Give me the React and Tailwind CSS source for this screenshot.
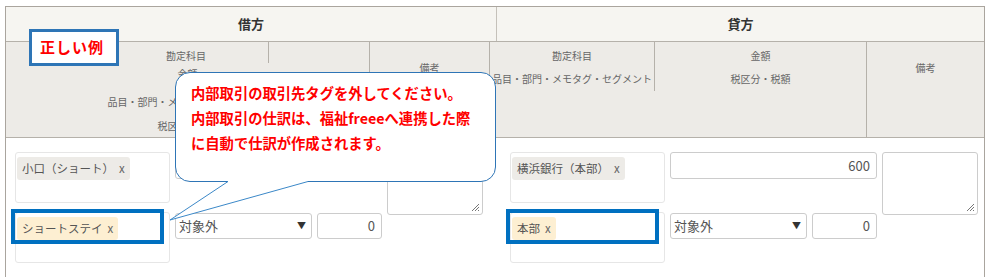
import React from 'react';

const jp = { fontFamily: '"Noto Sans CJK JP", "Noto Sans", sans-serif' };

const Tag = ({ label, warm }) => (
  <span
    className={`inline-flex items-center h-[23px] px-[5px] rounded-[3px] text-[11.5px] text-[#555] ${
      warm ? 'bg-[#fdefd2]' : 'bg-[#edebe7]'
    }`}
  >
    {label}
    <span className="ml-[5px] text-[#666]">x</span>
  </span>
);

const TagBox = ({ children, highlight }) => (
  <div className="relative w-[155px] h-[51px] border border-[#e6e6e6] rounded-[3px] p-[1px]">
    {children}
    {highlight && (
      <div className="absolute left-[-5px] top-[-4px] w-[153px] h-[35px] border-[4px] border-[#0070c0]" />
    )}
  </div>
);

const Resize = () => (
  <svg className="absolute right-[2px] bottom-[2px]" width="9" height="9" viewBox="0 0 9 9">
    <path d="M8 1 L1 8 M8 4 L4 8 M8 7 L7 8" stroke="#777" strokeWidth="1" />
  </svg>
);

const Select = () => (
  <div className="w-[137px] h-[26px] border border-[#ccc] rounded-[3px] flex items-center justify-between px-[3px] text-[13px] text-[#555]">
    <span>対象外</span>
    <span className="text-[9px] text-[#333] mr-[2px]">▼</span>
  </div>
);

const NumInput = ({ value, wide }) => (
  <div
    className={`${wide ? 'w-[207px] h-[27px]' : 'w-[65px] h-[26px]'} border border-[#ccc] rounded-[3px] flex items-center justify-end pr-[6px] text-[13px] text-[#555]`}
  >
    {value}
  </div>
);

const Entry = ({ first, second, amount }) => (
  <div className="flex gap-[5px]">
    <div className="flex flex-col gap-[9px] w-[155px]">
      <TagBox>
        <Tag label={first} />
      </TagBox>
      <TagBox highlight>
        <Tag label={second} warm />
      </TagBox>
    </div>
    <div className="flex flex-col justify-between w-[207px] h-[87px]">
      <NumInput value={amount} wide />
      <div className="flex gap-[5px]">
        <Select />
        <NumInput value="0" />
      </div>
    </div>
    <div className="relative w-[96px] h-[63px] border border-[#ccc] rounded-[3px]">
      <Resize />
    </div>
  </div>
);

export default function App() {
  return (
    <div className="relative w-[989px] h-[277px] bg-white overflow-hidden pl-[5px] pt-[6px]" style={jp}>
      <div className="w-[980px] h-[271px] border-l border-t border-r border-[#aaa59e] flex flex-col">
        {/* row 1 */}
        <div className="flex h-[35px] bg-[#f6f5f1] border-b border-[#b5b1aa] text-[13px] font-bold text-[#333]">
          <div className="w-[491px] border-r border-[#c5c1ba] flex items-center justify-center">借方</div>
          <div className="flex-1 flex items-center justify-center">貸方</div>
        </div>
        {/* row 2 */}
        <div className="flex h-[96px] bg-[#edebe7] border-b border-[#b5b1aa] text-[10px] text-[#666]">
          <div className="w-[363px] flex flex-col">
            <div className="flex h-[24px]">
              <div className="w-[262px] pl-[160px] pt-[6px]">勘定科目</div>
              <div className="flex-1 border-l border-[#b5b1aa]" />
            </div>
            <div className="flex flex-col items-center">
              <div className="h-[26px] leading-[22px]">金額</div>
              <div className="h-[25px] leading-[26px]">品目・部門・メモタグ・セグメント</div>
              <div className="leading-[24px]">税区分・税額</div>
            </div>
          </div>
          <div className="w-[120px] border-l border-[#b5b1aa] flex justify-center pt-[18px]">備考</div>
          <div className="w-[166px] border-l border-[#b5b1aa]">
            <div className="h-[49px] border-r border-[#b5b1aa] flex flex-col items-center pt-[6px] gap-[8px]">
              <div>勘定科目</div>
              <div className="whitespace-nowrap">品目・部門・メモタグ・セグメント</div>
            </div>
          </div>
          <div className="w-[211px] flex flex-col items-center pt-[6px] gap-[8px]">
            <div>金額</div>
            <div>税区分・税額</div>
          </div>
          <div className="flex-1 border-l border-[#b5b1aa] flex justify-center pt-[18px]">備考</div>
        </div>
        {/* body */}
        <div className="flex-1 flex pt-[14px] pl-[9px]">
          <Entry first="小口（ショート）" second="ショートステイ" amount="" />
          <div className="ml-[27px]">
            <Entry first="横浜銀行（本部）" second="本部" amount="600" />
          </div>
        </div>
      </div>

      {/* label */}
      <div className="absolute left-[29px] top-[29px] w-[90px] h-[37px] bg-white border-[3px] border-[#2e75b6] flex items-center pl-[8px] text-[15px] font-bold text-[#ff0000] tracking-[1px]">
        正しい例
      </div>

      {/* callout */}
      <div className="absolute left-[175px] top-[72px] w-[321px] h-[110px] bg-white border border-[#2e75b6] rounded-[15px] pl-[15px] pt-[7px] text-[14.3px] leading-[25px] font-bold text-[#ff0000]">
        <div>内部取引の取引先タグを外してください。</div>
        <div>内部取引の仕訳は、福祉freeeへ連携した際</div>
        <div>に自動で仕訳が作成されます。</div>
      </div>
      <svg className="absolute left-[165px] top-[175px]" width="150" height="50" viewBox="0 0 150 50">
        <polygon points="63,5 143,5 143,7.5 5,45 63,7.5" fill="#fff" />
        <polyline points="63,6.5 5,45 143,6.5" fill="none" stroke="#3b88c8" strokeWidth="1" />
      </svg>
    </div>
  );
}
